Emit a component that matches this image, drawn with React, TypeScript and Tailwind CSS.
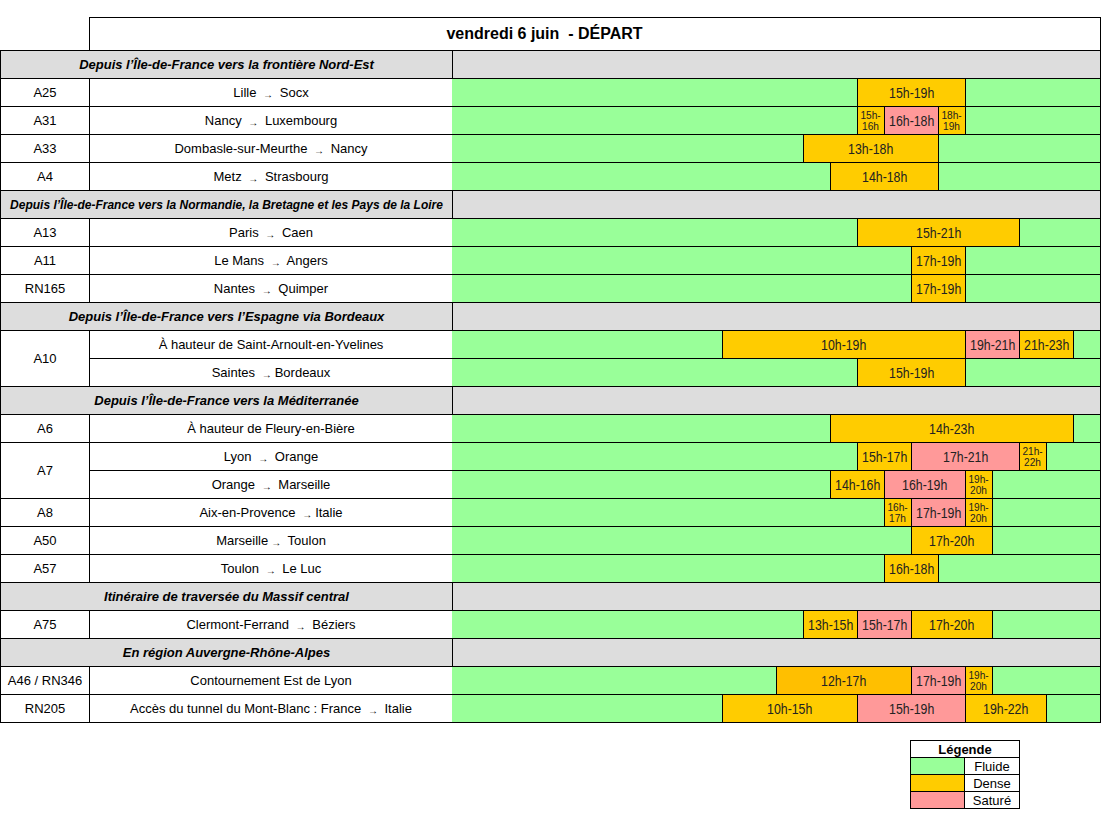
import React from "react";

type Seg = { from: number; to: number; kind: "d" | "s" | "d2"; small?: boolean };
type Route = { road?: string; span?: number; name: React.ReactNode; segs: Seg[] };
type Section = { title: string; small?: boolean; routes: Route[] };

const HOUR = 27;

const colors: Record<string, string> = {
  g: "#99FF99",
  d: "#FFCC00",
  d2: "#FFBF00",
  s: "#FF9999",
};

const Arrow = () => <span className="mx-[3px] inline-block text-[10px] align-[-1px]">→</span>;

const r = (a: string, b: string, gapA = true, gapB = true) => (
  <>
    {a}
    {gapA ? " " : ""}
    <Arrow />
    {gapB ? " " : ""}
    {b}
  </>
);

const sections: Section[] = [
  {
    title: "Depuis l’Île-de-France vers la frontière Nord-Est",
    routes: [
      { road: "A25", name: r("Lille", "Socx"), segs: [{ from: 15, to: 19, kind: "d" }] },
      {
        road: "A31",
        name: r("Nancy", "Luxembourg"),
        segs: [
          { from: 15, to: 16, kind: "d", small: true },
          { from: 16, to: 18, kind: "s" },
          { from: 18, to: 19, kind: "d", small: true },
        ],
      },
      { road: "A33", name: r("Dombasle-sur-Meurthe", "Nancy"), segs: [{ from: 13, to: 18, kind: "d" }] },
      { road: "A4", name: r("Metz", "Strasbourg"), segs: [{ from: 14, to: 18, kind: "d" }] },
    ],
  },
  {
    title: "Depuis l’Île-de-France vers la Normandie, la Bretagne et les Pays de la Loire",
    small: true,
    routes: [
      { road: "A13", name: r("Paris", "Caen"), segs: [{ from: 15, to: 21, kind: "d" }] },
      { road: "A11", name: r("Le Mans", "Angers"), segs: [{ from: 17, to: 19, kind: "d" }] },
      { road: "RN165", name: r("Nantes", "Quimper"), segs: [{ from: 17, to: 19, kind: "d" }] },
    ],
  },
  {
    title: "Depuis l’Île-de-France vers l’Espagne via Bordeaux",
    routes: [
      {
        road: "A10",
        span: 2,
        name: "À hauteur de Saint-Arnoult-en-Yvelines",
        segs: [
          { from: 10, to: 19, kind: "d" },
          { from: 19, to: 21, kind: "s" },
          { from: 21, to: 23, kind: "d" },
        ],
      },
      { name: r("Saintes", "Bordeaux", true, false), segs: [{ from: 15, to: 19, kind: "d" }] },
    ],
  },
  {
    title: "Depuis l’Île-de-France vers la Méditerranée",
    routes: [
      { road: "A6", name: "À hauteur de Fleury-en-Bière", segs: [{ from: 14, to: 23, kind: "d" }] },
      {
        road: "A7",
        span: 2,
        name: r("Lyon", "Orange"),
        segs: [
          { from: 15, to: 17, kind: "d" },
          { from: 17, to: 21, kind: "s" },
          { from: 21, to: 22, kind: "d", small: true },
        ],
      },
      {
        name: r("Orange", "Marseille"),
        segs: [
          { from: 14, to: 16, kind: "d" },
          { from: 16, to: 19, kind: "s" },
          { from: 19, to: 20, kind: "d", small: true },
        ],
      },
      {
        road: "A8",
        name: r("Aix-en-Provence", "Italie", true, false),
        segs: [
          { from: 16, to: 17, kind: "d", small: true },
          { from: 17, to: 19, kind: "s" },
          { from: 19, to: 20, kind: "d", small: true },
        ],
      },
      { road: "A50", name: r("Marseille", "Toulon", false, true), segs: [{ from: 17, to: 20, kind: "d" }] },
      { road: "A57", name: r("Toulon", "Le Luc"), segs: [{ from: 16, to: 18, kind: "d" }] },
    ],
  },
  {
    title: "Itinéraire de traversée du Massif central",
    routes: [
      {
        road: "A75",
        name: r("Clermont-Ferrand", "Béziers"),
        segs: [
          { from: 13, to: 15, kind: "d" },
          { from: 15, to: 17, kind: "s" },
          { from: 17, to: 20, kind: "d" },
        ],
      },
    ],
  },
  {
    title: "En région Auvergne-Rhône-Alpes",
    routes: [
      {
        road: "A46 / RN346",
        name: "Contournement Est de Lyon",
        segs: [
          { from: 12, to: 17, kind: "d2" },
          { from: 17, to: 19, kind: "s" },
          { from: 19, to: 20, kind: "d", small: true },
        ],
      },
      {
        road: "RN205",
        name: (
          <>
            Accès du tunnel du Mont-Blanc : France <Arrow /> Italie
          </>
        ),
        segs: [
          { from: 10, to: 15, kind: "d" },
          { from: 15, to: 19, kind: "s" },
          { from: 19, to: 22, kind: "d" },
        ],
      },
    ],
  },
];

// fill the gaps between congestion slots with "fluide" green
const fill = (segs: Seg[]) => {
  const out: { from: number; to: number; kind: string; small?: boolean }[] = [];
  let t = 0;
  for (const s of segs) {
    if (s.from > t) out.push({ from: t, to: s.from, kind: "g" });
    out.push(s);
    t = s.to;
  }
  if (t < 24) out.push({ from: t, to: 24, kind: "g" });
  return out;
};

const Timeline = ({ segs }: { segs: Seg[] }) => (
  <div className="-ml-px flex h-[27px] w-[648px]">
    {fill(segs).map((s, i) => (
      <div
        key={i}
        className={`flex shrink-0 items-center justify-center text-center text-[#222] ${
          i > 0 ? "border-l border-black" : ""
        }`}
        style={{ width: (s.to - s.from) * HOUR, backgroundColor: colors[s.kind] }}
      >
        {s.kind === "g" ? null : s.small ? (
          <span className="inline-block scale-x-[0.88] text-[11.5px] leading-[11px]">
            {s.from}h-
            <br />
            {s.to}h
          </span>
        ) : (
          <span className="inline-block scale-x-[0.88] whitespace-nowrap text-[14px] leading-none">
            {s.from}h-{s.to}h
          </span>
        )}
      </div>
    ))}
  </div>
);

export default function App() {
  return (
    <div className="min-h-screen bg-white pt-[17px] font-['Liberation_Sans',Arial,sans-serif] text-black">
      <table className="table-fixed border-collapse" style={{ width: 1100 }}>
        <colgroup>
          <col style={{ width: 89 }} />
          <col style={{ width: 363 }} />
          <col style={{ width: 648 }} />
        </colgroup>
        <tbody>
          <tr className="h-[33px]">
            <td className="p-0" />
            <td colSpan={2} className="border border-black p-0 pr-[101px] text-center text-[16px] font-bold">
              vendredi 6 juin&nbsp; - DÉPART
            </td>
          </tr>
          {sections.map((sec) => (
            <React.Fragment key={sec.title}>
              <tr className="h-[28px]">
                <td
                  colSpan={2}
                  className={`border border-black bg-[#dddddd] p-0 text-center font-bold italic ${
                    sec.small ? "text-[12px]" : "text-[13px]"
                  }`}
                >
                  {sec.title}
                </td>
                <td className="border border-black bg-[#dddddd] p-0" />
              </tr>
              {sec.routes.map((rt, i) => (
                <tr key={i} className="h-[28px]">
                  {rt.road && (
                    <td rowSpan={rt.span ?? 1} className="border border-black p-0 text-center text-[13px]">
                      {rt.road}
                    </td>
                  )}
                  <td className="border border-black p-0 text-center text-[13px] whitespace-nowrap">{rt.name}</td>
                  <td className="border border-black p-0 align-top">
                    <Timeline segs={rt.segs} />
                  </td>
                </tr>
              ))}
            </React.Fragment>
          ))}
        </tbody>
      </table>

      <div className="mt-[17px] pl-[910px]">
        <table className="table-fixed border-collapse text-[13px]" style={{ width: 109 }}>
          <colgroup>
            <col style={{ width: 54 }} />
            <col style={{ width: 55 }} />
          </colgroup>
          <tbody>
            <tr className="h-[17px]">
              <td colSpan={2} className="border border-black p-0 text-center font-bold leading-none">
                Légende
              </td>
            </tr>
            {[
              ["#99FF99", "Fluide"],
              ["#FFCC00", "Dense"],
              ["#FF9999", "Saturé"],
            ].map(([c, l]) => (
              <tr key={l} className="h-[17px]">
                <td className="border border-black p-0" style={{ backgroundColor: c }} />
                <td className="border border-black p-0 text-center leading-none">{l}</td>
              </tr>
            ))}
          </tbody>
        </table>
      </div>
    </div>
  );
}
